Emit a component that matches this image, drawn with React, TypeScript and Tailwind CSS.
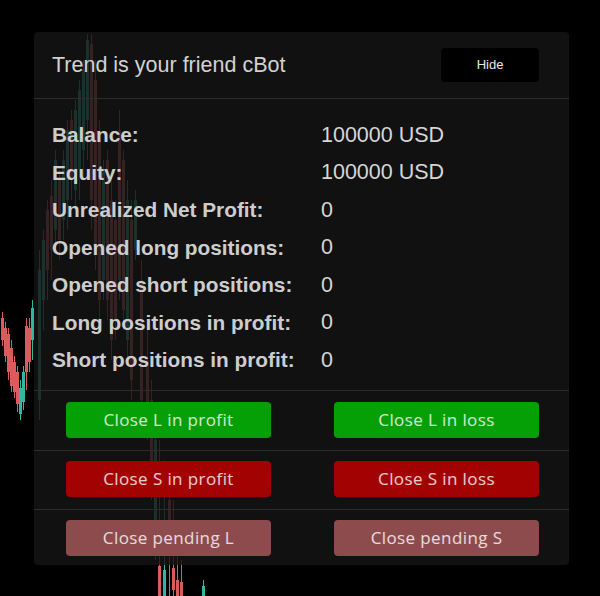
import React from 'react';

// candle: x, wick top, wick bottom, body top, body bottom, colour
type Candle = [number, number, number, number, number, 'r' | 'g'];

const RED = '#d95b5b';
const TEAL = '#2fb89f';

const candles: Candle[] = [
  // left edge cluster
  [1, 312, 346, 318, 340, 'r'],
  [4, 322, 362, 328, 356, 'r'],
  [7, 328, 380, 334, 372, 'r'],
  [10, 340, 392, 348, 386, 'r'],
  [13, 356, 398, 362, 392, 'r'],
  [16, 366, 412, 372, 404, 'r'],
  [19, 380, 420, 388, 414, 'g'],
  [22, 366, 410, 372, 402, 'g'],
  [25, 318, 390, 326, 372, 'r'],
  [28, 318, 372, 328, 362, 'r'],
  [31, 300, 360, 308, 340, 'g'],
  // behind the panel
  [38, 250, 420, 270, 400, 'g'],
  [42, 230, 330, 240, 300, 'g'],
  [46, 200, 300, 210, 270, 'r'],
  [50, 180, 280, 196, 250, 'r'],
  [54, 150, 250, 160, 230, 'g'],
  [58, 170, 260, 180, 240, 'r'],
  [62, 150, 240, 160, 220, 'g'],
  [66, 120, 230, 130, 200, 'g'],
  [70, 110, 200, 120, 180, 'r'],
  [74, 100, 210, 110, 190, 'g'],
  [78, 80, 200, 90, 170, 'g'],
  [82, 60, 180, 70, 150, 'g'],
  [86, 34, 160, 40, 120, 'g'],
  [90, 34, 230, 44, 200, 'r'],
  [94, 60, 270, 80, 250, 'r'],
  [98, 120, 330, 140, 300, 'r'],
  [102, 160, 300, 170, 280, 'g'],
  [106, 150, 320, 160, 300, 'r'],
  [110, 180, 360, 200, 340, 'r'],
  [114, 200, 340, 220, 320, 'r'],
  [118, 110, 300, 130, 280, 'r'],
  [122, 150, 330, 160, 310, 'r'],
  [126, 180, 360, 200, 340, 'g'],
  [130, 200, 400, 220, 380, 'r'],
  [134, 190, 260, 200, 250, 'g'],
  [140, 260, 420, 280, 400, 'r'],
  [146, 330, 440, 360, 420, 'r'],
  [150, 380, 500, 400, 480, 'r'],
  [154, 420, 560, 440, 540, 'g'],
  [158, 440, 596, 566, 596, 'r'],
  [163, 460, 596, 570, 596, 'g'],
  [168, 480, 596, 500, 520, 'r'],
  [172, 500, 596, 568, 590, 'r'],
  [176, 520, 596, 580, 596, 'r'],
  [180, 560, 596, 582, 596, 'r'],
  [202, 580, 596, 586, 596, 'g'],
];

const Chart: React.FC = () => (
  <svg className="absolute inset-0" width={600} height={596} viewBox="0 0 600 596">
    {candles.map(([x, wt, wb, bt, bb, c], i) => (
      <g key={i} stroke={c === 'r' ? RED : TEAL} fill={c === 'r' ? RED : TEAL}>
        <line x1={x + 1.5} x2={x + 1.5} y1={wt} y2={wb} strokeWidth={1} />
        <rect x={x} y={bt} width={3} height={bb - bt} stroke="none" />
      </g>
    ))}
  </svg>
);

const stats: [string, string][] = [
  ['Balance:', '100000 USD'],
  ['Equity:', '100000 USD'],
  ['Unrealized Net Profit:', '0'],
  ['Opened long positions:', '0'],
  ['Opened short positions:', '0'],
  ['Long positions in profit:', '0'],
  ['Short positions in profit:', '0'],
];

const btn =
  'h-[36px] w-[205px] rounded-[4px] text-[17px] tracking-[0.4px] text-white/80 flex items-center justify-center';

const App: React.FC = () => {
  return (
    <div className="relative w-[600px] h-[596px] bg-black overflow-hidden">
      <Chart />
      <div className="relative pl-[34px] pt-[32px]">
        <div className="w-[535px] h-[533px] rounded-[4px] bg-[#151515]/[0.82] flex flex-col overflow-hidden">
          {/* header */}
          <div
            className="h-[67px] shrink-0 flex items-center justify-between pl-[18px] pr-[30px] border-b border-[#2c2c2c]"
            style={{ fontFamily: '"Liberation Sans", Arial, sans-serif' }}
          >
            <span className="text-[21.5px] text-[#d2d2d2]">Trend is your friend cBot</span>
            <button className="w-[98px] h-[34px] rounded-[4px] bg-black text-[13px] text-[#e8e8e8]">Hide</button>
          </div>

          {/* stats */}
          <div
            className="pt-[17px] pb-[11px] pl-[18px] shrink-0"
            style={{ fontFamily: '"Liberation Sans", Arial, sans-serif' }}
          >
            {stats.map(([label, value]) => (
              <div key={label} className="flex items-center h-[37.5px]">
                <span className="w-[269px] font-bold text-[20.8px] text-[#cdcdcd]">{label}</span>
                <span className="text-[21.5px] text-[#d6d6d6]">{value}</span>
              </div>
            ))}
          </div>

          {/* actions */}
          <div style={{ fontFamily: '"Open Sans", sans-serif' }}>
            <div className="h-[60px] border-t border-[#2c2c2c] pl-[32px] pr-[30px] pt-[11px] flex gap-[63px]">
              <button className={`${btn} bg-[#05a005]`}>Close L in profit</button>
              <button className={`${btn} bg-[#05a005]`}>Close L in loss</button>
            </div>
            <div className="h-[59px] border-t border-[#2c2c2c] pl-[32px] pr-[30px] pt-[10px] flex gap-[63px]">
              <button className={`${btn} bg-[#a30202]`}>Close S in profit</button>
              <button className={`${btn} bg-[#a30202]`}>Close S in loss</button>
            </div>
            <div className="h-[56px] border-t border-[#2c2c2c] pl-[32px] pr-[30px] pt-[10px] flex gap-[63px]">
              <button className={`${btn} bg-[#8d4b4d]`}>Close pending L</button>
              <button className={`${btn} bg-[#8d4b4d]`}>Close pending S</button>
            </div>
          </div>
        </div>
      </div>
    </div>
  );
};

export default App;
